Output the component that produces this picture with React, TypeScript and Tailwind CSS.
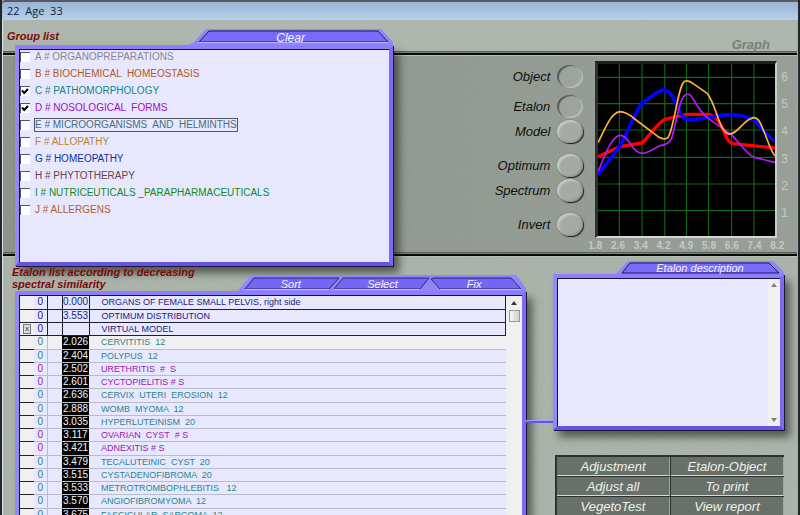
import { ReactNode, useState } from "react";

type Group = { label: string; color: string; checked?: boolean; focused?: boolean };

const groups: Group[] = [
  { label: "A # ORGANOPREPARATIONS", color: "text-[#8a8494]" },
  { label: "B # BIOCHEMICAL  HOMEOSTASIS", color: "text-[#b0592c]" },
  { label: "C # PATHOMORPHOLOGY", color: "text-[#128488]", checked: true },
  { label: "D # NOSOLOGICAL  FORMS", color: "text-[#9a10c0]", checked: true },
  { label: "E # MICROORGANISMS  AND  HELMINTHS", color: "text-[#3f6f86]", focused: true },
  { label: "F # ALLOPATHY", color: "text-[#c0842c]" },
  { label: "G # HOMEOPATHY", color: "text-[#1030a0]" },
  { label: "H # PHYTOTHERAPY", color: "text-[#6c3c50]" },
  { label: "I # NUTRICEUTICALS _PARAPHARMACEUTICALS", color: "text-[#128a20]" },
  { label: "J # ALLERGENS", color: "text-[#b0602c]" },
];

type Etalon = { value: string; name: string; kind: "pinned" | "teal" | "violet"; mark?: boolean };

const etalons: Etalon[] = [
  { value: "0.000", name: "ORGANS OF FEMALE SMALL PELVIS, right side", kind: "pinned" },
  { value: "3.553", name: "OPTIMUM DISTRIBUTION", kind: "pinned" },
  { value: "", name: "VIRTUAL MODEL", kind: "pinned", mark: true },
  { value: "2.026", name: "CERVITITIS  12", kind: "teal" },
  { value: "2.404", name: "POLYPUS  12", kind: "teal" },
  { value: "2.502", name: "URETHRITIS  #  S", kind: "violet" },
  { value: "2.601", name: "CYCTOPIELITIS # S", kind: "violet" },
  { value: "2.636", name: "CERVIX  UTERI  EROSION  12", kind: "teal" },
  { value: "2.888", name: "WOMB  MYOMA  12", kind: "teal" },
  { value: "3.035", name: "HYPERLUTEINISM  20", kind: "teal" },
  { value: "3.117", name: "OVARIAN  CYST  # S", kind: "violet" },
  { value: "3.421", name: "ADNEXITIS # S", kind: "violet" },
  { value: "3.479", name: "TECALUTEINIC  CYST  20", kind: "teal" },
  { value: "3.515", name: "CYSTADENOFIBROMA  20", kind: "teal" },
  { value: "3.533", name: "METROTROMBOPHLEBITIS   12", kind: "teal" },
  { value: "3.570", name: "ANGIOFIBROMYOMA  12", kind: "teal" },
  { value: "3.675", name: "FASCICULAR  SARCOMA  12", kind: "teal" },
];

const kindColor = {
  pinned: "text-[#1c1c84]",
  teal: "text-[#2a8690]",
  violet: "text-[#9a20b4]",
};

const xTicks = ["1.8", "2.6", "3.4", "4.2", "4.9", "5.8", "6.6", "7.4", "8.2"];
const yTicks = ["6", "5", "4", "3", "2", "1"];
const actions = ["Adjustment", "Etalon-Object", "Adjust all", "To print", "VegetoTest", "View report"];

function Frame({ className, children }: { className: string; children: ReactNode }) {
  return (
    <div
      className={`border-4 border-t-[#8d7ffb] border-r-[#7d6cf2] border-b-[#6655e0] border-l-[#9489fa] shadow-[1px_1px_0_#1d1838,6px_7px_8px_rgba(20,28,20,0.6)] ${className}`}
    >
      <div className="flex h-full w-full overflow-hidden border-t border-l border-[#15123c] bg-[#e7e8fd]">{children}</div>
    </div>
  );
}

function ScrollArrow({ up, faint }: { up?: boolean; faint?: boolean }) {
  return (
    <svg viewBox="0 0 6 4" className={`h-1 w-1.5 ${faint ? "fill-[#808080]" : "fill-[#333]"}`} aria-hidden="true">
      <path d={up ? "M0 4L3 0L6 4Z" : "M0 0L3 4L6 0Z"} />
    </svg>
  );
}

function SpectrumChart() {
  return (
    <svg viewBox="355 75 530 516" preserveAspectRatio="none" className="block h-full w-full" role="img" aria-label="Spectrum graph">
      <rect x="355" y="75" width="530" height="516" fill="#000" />
      <path
        d="M419 75V591M487 75V591M555 75V591M620 75V591M686 75V591M755 75V591M822 75V591M355 115H885M355 194H885M355 273H885M355 355H885M355 435H885M355 515H885"
        stroke="#10661a"
        strokeWidth="3.4"
      />
      <g fill="none" strokeLinejoin="round">
        <path
          d="M355 353L420 323L487 312C510 290 530 255 555 241L620 226H686C710 232 720 250 735 285Q745 312 760 314L885 327"
          stroke="#fe0000"
          strokeWidth="10"
        />
        <path
          d="M355 408L420 322C445 280 470 210 487 192L530 162Q555 143 575 168C590 190 600 232 617 240C650 246 690 232 740 227Q790 226 822 243C840 262 865 295 885 307"
          stroke="#0202fe"
          strokeWidth="11"
        />
        <path
          d="M355 398C375 350 395 293 420 289Q435 288 450 312C465 335 475 343 490 343Q500 343 540 320Q565 318 575 300C595 230 600 172 620 166Q632 164 640 180Q665 225 690 242L755 287C780 315 800 345 822 355L885 370"
          stroke="#b01cf4"
          strokeWidth="5"
        />
        <path
          d="M355 311C380 260 395 222 420 218Q440 218 465 240L535 293Q555 305 565 295C585 260 595 135 615 127Q625 122 640 134L683 164C710 200 715 270 745 285C770 290 790 242 820 236Q832 236 840 250C860 290 870 335 885 351"
          stroke="#ffb040"
          strokeWidth="5"
        />
      </g>
    </svg>
  );
}

function Toggle({ label, on }: { label: string; on?: boolean }) {
  return (
    <label className="flex h-[25px] items-center justify-end gap-[7px] text-[13px] text-[#0c100c] italic">
      {label}
      <input
        type="checkbox"
        defaultChecked={on}
        className="h-[23px] w-[26px] appearance-none rounded-[50%] bg-[#a5aba4] shadow-[inset_2px_2px_2px_#c6cbc5,inset_-1px_-1px_2px_#868c85,1px_1px_1px_#1c211c,0_0_1px_#4a4f4a] checked:bg-[#9da49c] checked:shadow-[inset_2px_1px_1px_#555b55,inset_-1px_-1px_2px_#c2c8c1]"
      />
    </label>
  );
}

function Rule({ className }: { className: string }) {
  return (
    <div className={`col-span-full flex flex-col ${className}`}>
      <div className="h-px bg-[#59605a]" />
      <div className="h-px bg-[#7b827b]" />
      <div className="h-0.5 bg-[#080a08]" />
      <div className="h-px bg-[#b9bfb8]" />
    </div>
  );
}

export default function App() {
  const [picked, setPicked] = useState(groups.map((g) => !!g.checked));

  return (
    <div className="flex h-screen flex-col overflow-hidden border-r-2 border-l-2 border-[#23262a] bg-[#a2aaa2] font-['Liberation_Sans',Arial,sans-serif]">
      <header className="flex h-5 shrink-0 items-center rounded-tl border-t-2 border-[#5a5a62] bg-linear-to-b from-[#98b5d6] to-[#b8d0e8] px-[5px] font-['Open_Sans',sans-serif] text-[11px] whitespace-pre text-[#16202c]">
        22  Age  33
      </header>

      <main className="relative isolate grid min-h-0 flex-1 grid-cols-[minmax(0,1fr)_271px] grid-rows-[31px_5px_196px_5px_minmax(0,1fr)] border-r border-l border-r-[#5fc4dc] border-l-[#dfe4e0]">
        <svg className="pointer-events-none absolute inset-0 -z-10 h-full w-full opacity-20" aria-hidden="true">
          <filter id="grain">
            <feTurbulence type="fractalNoise" baseFrequency="0.6" numOctaves="2" seed="4" />
            <feColorMatrix type="saturate" values="0" />
          </filter>
          <rect width="100%" height="100%" filter="url(#grain)" />
        </svg>

        <div className="col-span-full row-start-1 bg-[#b4beb2]/60" />
        <Rule className="row-start-2" />
        <div className="col-span-full col-start-1 row-start-3 bg-linear-to-r from-[#747c74]/50 to-[#8a938a]/50" />
        <Rule className="row-start-4" />
        <div className="col-span-full col-start-1 row-start-5 bg-[#b4beb2]/40" />

        <div className="col-start-1 row-span-5 row-start-1 flex min-h-0 flex-col pl-3">
          <section className="flex w-[74%] shrink-0 flex-col">
            <div className="-ml-2 flex h-[25px] items-end justify-between">
              <h2 className="pb-px text-[11px] leading-[15px] font-bold text-[#7c0808] italic">Group list</h2>
              <button className="relative h-4 w-[205px] text-[12px] leading-[18px] text-[#f4f2ff] italic">
                <svg viewBox="0 0 205 16" preserveAspectRatio="none" className="absolute inset-0 h-full w-full" aria-hidden="true">
                  <path d="M0 16L5 14L18 0H193L205 13V16Z" fill="#9184fc" />
                  <path d="M11 13L21 2H190L200 13Z" fill="#7a6cfb" stroke="#1d1952" />
                  <path d="M11 13.5H200" stroke="#b9b2ff" />
                </svg>
                <span className="relative">Clear</span>
              </button>
            </div>
            <Frame className="h-[221px]">
              <ul className="-mt-0.5 flex flex-col">
                {groups.map((g, i) => (
                  <li key={g.label}>
                    <label className={`flex h-[17px] items-center gap-[5px] text-[10px] whitespace-pre ${g.color}`}>
                      <span className="grid size-[10px]">
                        <input
                          type="checkbox"
                          checked={picked[i]}
                          onChange={() => setPicked(picked.map((p, j) => (j === i ? !p : p)))}
                          className="col-start-1 row-start-1 size-[10px] appearance-none border-t border-l border-[#55555c] bg-white"
                        />
                        {picked[i] && (
                          <svg viewBox="0 0 10 10" className="pointer-events-none col-start-1 row-start-1 size-[10px]" aria-hidden="true">
                            <path d="M2 4.5L4.2 7L8 3" fill="none" stroke="#000" strokeWidth="2" />
                          </svg>
                        )}
                      </span>
                      <span className={`leading-[12px] ${g.focused ? "outline outline-[#5c5458]" : ""}`}>{g.label}</span>
                    </label>
                  </li>
                ))}
              </ul>
            </Frame>
          </section>

          <section className="flex min-h-0 flex-1 flex-col">
            <div className="-ml-[3px] flex h-[25px] shrink-0 items-end justify-between">
              <h2 className="w-[200px] self-start text-[11px] leading-[12px] font-bold text-[#7c0808] italic">
                Etalon list according to decreasing spectral similarity
              </h2>
              <div className="relative h-4 w-[288px]">
                <svg viewBox="0 0 288 16" preserveAspectRatio="none" className="absolute inset-0 h-full w-full" aria-hidden="true">
                  <path d="M0 16L13 0H278L288 13V16Z" fill="#9184fc" />
                  <path d="M7 14L16 3H101L91 14Z" fill="#7567f4" stroke="#2c2670" />
                  <path d="M96 14L105 3H191L182 14Z" fill="#7567f4" stroke="#2c2670" />
                  <path d="M202 14L193 4L196 3H273L283 14Z" fill="#7567f4" stroke="#2c2670" />
                  <path d="M7 14.5H91M96 14.5H182M202 14.5H283" stroke="#b9b2ff" />
                </svg>
                <div className="relative grid h-full grid-cols-3 pr-[6px] pl-[7px] text-[11px] leading-[18px] text-[#f4f2ff] italic">
                  <button>Sort</button>
                  <button>Select</button>
                  <button>Fix</button>
                </div>
              </div>
            </div>
            <Frame className="h-[260px] shrink-0">
              <table className="w-full flex-1 table-fixed border-collapse self-start text-[10px] leading-[10px]">
                <colgroup>
                  <col className="w-[14px]" />
                  <col className="w-[13px]" />
                  <col className="w-[15px]" />
                  <col className="w-[27px]" />
                  <col />
                </colgroup>
                <tbody>
                  {etalons.map((e, i) => {
                    const pinned = e.kind === "pinned";
                    return (
                      <tr
                        key={e.name}
                        className={`${i % 4 === 3 ? "h-[14px]" : "h-[13px]"} border-b ${pinned ? "border-[#20202c]" : "border-[#bcbcc8]"} ${i === 3 ? "bg-[#f0f0f2]" : ""} ${kindColor[e.kind]}`}
                      >
                        <td className="border-b border-[#20202c] bg-[#f0f0f2] p-0 text-center text-[8px] leading-[8px] text-[#333]">
                          {e.mark && <span className="ml-[3px] block w-2 border border-[#777] bg-[#ddd]">x</span>}
                        </td>
                        <td className={`border-r p-0 text-center ${pinned ? "border-r-[#20202c]" : "border-r-[#bcbcc8]"}`}>0</td>
                        <td className="p-0" />
                        <td className={`p-0 text-center ${pinned ? "border-r border-l border-[#20202c]" : "bg-black text-[#f4f4f4]"}`}>{e.value}</td>
                        <td className={`overflow-hidden p-0 pl-3 text-[9px] whitespace-pre ${pinned ? "border-r border-[#20202c]" : ""}`}>{e.name}</td>
                      </tr>
                    );
                  })}
                </tbody>
              </table>
              <div className="flex w-4 shrink-0 flex-col items-center gap-[5px] bg-[#f0f0f0] pt-[5px]">
                <ScrollArrow up />
                <div className="h-3 w-[11px] border border-[#9a9a9a] bg-linear-to-r from-[#f6f6f6] to-[#cfcfcf]" />
              </div>
            </Frame>
          </section>
        </div>

        <h2 className="col-start-2 row-start-1 self-end justify-self-end pr-[27px] text-[13px] leading-[12px] font-bold text-[#7a807a] italic">Graph</h2>

        <section className="col-span-full col-start-1 row-start-3 flex gap-[12px] justify-self-end pt-2 pr-[9px]">
          <div className="flex flex-col gap-[5px]">
            <Toggle label="Object" on />
            <div>
              <Toggle label="Etalon" on />
              <Toggle label="Model" />
            </div>
            <div className="mt-1">
              <Toggle label="Optimum" />
              <Toggle label="Spectrum" />
            </div>
            <div className="mt-1">
              <Toggle label="Invert" />
            </div>
          </div>
          <div className="-mt-[3px] text-[10px] font-bold text-[#c4c9c3]">
            <div className="flex">
              <div className="h-[177px] w-[182px] border-t-[3px] border-r-2 border-b-2 border-l-[3px] border-t-[#1c1f1c] border-r-[#c8cdc7] border-b-[#d4d8d3] border-l-[#2c302c]">
                <SpectrumChart />
              </div>
              <ol className="flex h-[168px] flex-col justify-between py-[6px] pl-1 text-[12px] leading-[20px] font-normal">
                {yTicks.map((t) => (
                  <li key={t}>{t}</li>
                ))}
              </ol>
            </div>
            <ol className="-ml-[7px] flex w-[196px] justify-between leading-[16px]">
              {xTicks.map((t) => (
                <li key={t}>{t}</li>
              ))}
            </ol>
          </div>
        </section>

        <section className="col-start-2 row-start-5 flex min-h-0 flex-col pt-[4px] pr-[13px]">
          <h2 className="relative h-[13px] w-[168px] self-end text-center text-[11px] leading-[14px] text-[#f4f2ff] italic">
            <svg viewBox="0 0 168 13" preserveAspectRatio="none" className="absolute inset-0 h-full w-full" aria-hidden="true">
              <path d="M0 13L12 0H157L168 11V13Z" fill="#9184fc" />
              <path d="M6 12L14 2H153L163 12Z" fill="#7a6cfb" stroke="#1d1952" />
            </svg>
            <span className="relative">Etalon description</span>
          </h2>
          <div className="flex shrink-0 items-end">
            <div className="mb-[7px] h-[3px] w-[27px] border-t border-[#a79dff] bg-[#6655e0]" />
            <Frame className="h-[156px] flex-1">
              <textarea readOnly aria-label="Etalon description" className="min-w-0 flex-1 resize-none bg-transparent outline-none" />
              <div className="flex w-3 shrink-0 flex-col items-center justify-between bg-[#f0f0f0] py-1">
                <ScrollArrow up faint />
                <ScrollArrow faint />
              </div>
            </Frame>
          </div>
          <div className="mt-[25px] ml-[29px] grid shrink-0 grid-cols-2 gap-px border-t-2 border-l-2 border-t-[#2c322d] border-l-[#2c322d] bg-[#2c322d]">
            {actions.map((a) => (
              <button
                key={a}
                className="h-[19px] border-r border-b border-r-[#a0a7a0] border-b-[#d6dad5] bg-[#687069] text-[13px] leading-[17px] text-[#eef2ec] italic"
              >
                {a}
              </button>
            ))}
          </div>
        </section>
      </main>
    </div>
  );
}
